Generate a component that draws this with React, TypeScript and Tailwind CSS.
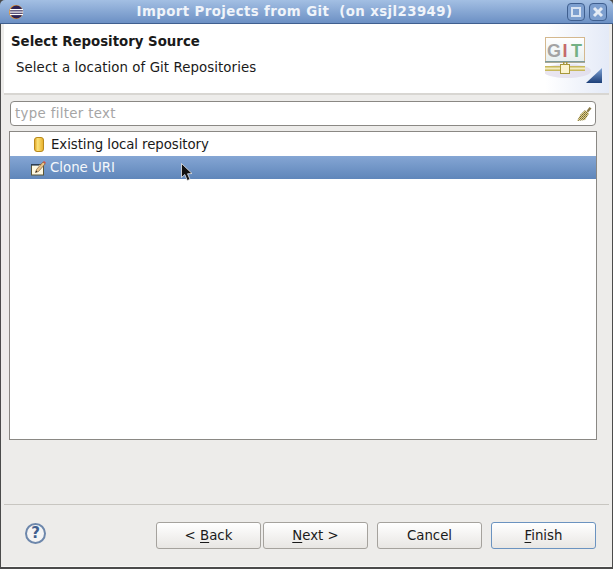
const font = "font-['DejaVu_Sans',sans-serif] text-[13.33px]";

const EclipseIcon = () => (
  <svg width="16" height="16" viewBox="0 0 16 16">
    <circle cx="8" cy="8" r="7" fill="#e8912c" />
    <circle cx="8.4" cy="8" r="6.4" fill="#2c2255" />
    <rect x="2" y="5" width="13" height="1.3" fill="#fff" />
    <rect x="1.8" y="7.4" width="13.4" height="1.3" fill="#fff" />
    <rect x="2" y="9.8" width="13" height="1.3" fill="#fff" />
  </svg>
);

const TitleButton = ({ children }: { children: React.ReactNode }) => (
  <div className="w-[18px] h-[18px] rounded-[4px] border border-[#3f5f8f] bg-[#7d9fcf] flex items-center justify-center">
    {children}
  </div>
);

const GitLogo = () => (
  <svg width="60" height="50" viewBox="0 0 60 50">
    <defs>
      <linearGradient id="tri" x1="0" y1="0" x2="0" y2="1">
        <stop offset="0" stopColor="#7fa3d6" />
        <stop offset="1" stopColor="#1c3f78" />
      </linearGradient>
      <linearGradient id="card" x1="0" y1="0" x2="0" y2="1">
        <stop offset="0" stopColor="#ffffff" />
        <stop offset="1" stopColor="#e6eeee" />
      </linearGradient>
    </defs>
    <ellipse cx="22" cy="34" rx="24" ry="7" fill="#dcd6e6" opacity="0.6" />
    <rect x="0.5" y="0.5" width="39" height="25" fill="url(#card)" stroke="#d4b88e" />
    <rect x="0" y="24" width="40" height="1.5" fill="#7f9a9a" />
    <text x="2" y="19.5" fontFamily="Liberation Sans" fontWeight="700" fontSize="18" fill="#a3a3a3">G</text>
    <text x="17.5" y="19.5" fontFamily="Liberation Sans" fontWeight="700" fontSize="18" fill="#c56a6a">I</text>
    <text x="26" y="19.5" fontFamily="Liberation Sans" fontWeight="700" fontSize="18" fill="#74b184">T</text>
    <rect x="0" y="29" width="40" height="5" fill="#f2ecc0" />
    <rect x="0" y="29" width="40" height="1.5" fill="#c8b85c" />
    <rect x="0" y="32.5" width="40" height="1.5" fill="#c8b85c" />
    <rect x="18" y="25" width="1.5" height="2" fill="#a8983c" />
    <rect x="21" y="25" width="1.5" height="2" fill="#a8983c" />
    <rect x="15.5" y="27.5" width="9" height="9" fill="#fbf4d0" stroke="#a8983c" />
    <path d="M41 46 L57 46 L57 31 Z" fill="url(#tri)" />
  </svg>
);

const Broom = () => (
  <svg width="16" height="16" viewBox="0 0 16 16">
    <defs>
      <pattern id="bristle" width="2" height="2" patternUnits="userSpaceOnUse">
        <rect width="2" height="2" fill="#e2d288" />
        <rect width="1" height="1" fill="#6f6438" />
        <rect x="1" y="1" width="1" height="1" fill="#8d8048" />
      </pattern>
    </defs>
    <path d="M10.5 5 L13.5 1 L15.5 2.5 L12 6.5 Z" fill="#8a7a48" />
    <path d="M9 4 L13 7.5 L9 14 L1 15 L4.5 8.5 Z" fill="url(#bristle)" />
  </svg>
);

const RepoIcon = () => (
  <svg width="10" height="15" viewBox="0 0 10 15">
    <defs>
      <linearGradient id="can" x1="0" y1="0" x2="1" y2="0">
        <stop offset="0" stopColor="#e0a020" />
        <stop offset="0.35" stopColor="#fbe37a" />
        <stop offset="1" stopColor="#e8ae28" />
      </linearGradient>
    </defs>
    <rect x="0.5" y="0.5" width="9" height="14" rx="2.5" fill="url(#can)" stroke="#b98a1c" />
  </svg>
);

const CloneIcon = () => (
  <svg width="16" height="16" viewBox="0 0 16 16">
    <rect x="1.5" y="4.5" width="12" height="10.5" fill="#fdf8e2" stroke="#5a5636" />
    <rect x="1" y="4" width="8" height="1.6" fill="#2d3f55" />
    <path d="M5.5 12.5 L6.5 9.5 L13 2 L15.2 3.8 L8.5 11.5 Z" fill="#e9c48a" stroke="#7a5a3a" strokeWidth="0.7" />
    <path d="M13 2 L14 1 L15.8 2.6 L15.2 3.8 Z" fill="#d8523f" />
    <path d="M5.5 12.5 L6.2 10.6 L7.4 11.8 Z" fill="#222" />
  </svg>
);

const Cursor = () => (
  <svg className="absolute left-[171px] top-[7px]" width="14" height="20" viewBox="0 0 14 20">
    <path d="M0.5 0.5 L0.5 14.5 L3.8 11.5 L6.3 17.5 L9 16.3 L6.5 10.8 L11 10.5 Z" fill="#111" stroke="#e8e8e8" strokeWidth="0.8" />
  </svg>
);

const Mnemonic = ({ children }: { children: React.ReactNode }) => (
  <span className="underline underline-offset-2">{children}</span>
);

const WizardButton = ({ children, primary }: { children: React.ReactNode; primary?: boolean }) => (
  <button
    className={`w-[105px] h-[27px] rounded-[3px] border bg-gradient-to-b from-[#ffffff] to-[#e8e6e3] text-[#1a1a1a] flex items-center justify-center ${font} ${
      primary ? "border-[#6b93c0]" : "border-[#a5a29d]"
    }`}
  >
    <span>{children}</span>
  </button>
);

export default function App() {
  return (
    <div className={`w-[613px] h-[569px] flex flex-col bg-[#4b4b4b] overflow-hidden ${font}`}>
      {/* Title bar */}
      <div className="h-[24px] shrink-0 rounded-t-[5px] bg-gradient-to-b from-[#a3bfe3] to-[#6c90c4] border-b border-[#3f5f8f] flex items-center pl-[8px] pr-[6px]">
        <EclipseIcon />
        <div className="flex-1 text-center font-bold text-[#f0f4fa] tracking-[0.4px] whitespace-pre pt-[1px] pr-[2px]">
          Import Projects from Git  (on xsjl23949)
        </div>
        <div className="flex gap-[4px]">
          <TitleButton>
            <div className="w-[10px] h-[10px] border-2 border-[#d8e3f2]" />
          </TitleButton>
          <TitleButton>
            <svg width="12" height="12" viewBox="0 0 12 12">
              <path d="M2 2 L10 10 M10 2 L2 10" stroke="#e4ebf5" strokeWidth="3" />
            </svg>
          </TitleButton>
        </div>
      </div>

      {/* Body */}
      <div className="flex-1 mx-[1px] mb-[2px] border-x-[3px] border-x-[#edecea] border-b border-b-[#f8f8f6] flex flex-col bg-[#edecea]">
        {/* Header */}
        <div className="h-[71px] shrink-0 bg-white border-b-2 border-[#d8d6d2] flex relative overflow-hidden">
          <div className="flex-1 pl-[7px] pt-[10px]">
            <div className="font-bold text-[#1a1a1a] leading-[16px]">Select Repository Source</div>
            <div className="pl-[5px] mt-[10px] text-[#1a1a1a] leading-[16px] tracking-[0.08px]">Select a location of Git Repositories</div>
          </div>
          <div className="w-[80px] bg-gradient-to-r from-white from-20% to-[#e4eaf7] pl-[16px] pt-[13px]">
            <GitLogo />
          </div>
        </div>

        {/* Filter */}
        <div className="ml-[6px] mr-[13px] mt-[6px] h-[25px] shrink-0 rounded-[4px] border border-[#8a8884] bg-white flex items-center pl-[4px] pr-[3px]">
          <span className="flex-1 text-[#a5a5a5] tracking-[0.33px]">type filter text</span>
          <Broom />
        </div>

        {/* Tree */}
        <div className="ml-[5px] mr-[12px] mt-[5px] h-[309px] shrink-0 border border-[#8a8884] bg-white">
          <div className="h-[24px] flex items-center pl-[24px] pt-[1px] gap-[7px] text-[#1a1a1a]">
            <RepoIcon />
            <span className="tracking-[-0.08px]">Existing local repository</span>
          </div>
          <div className="h-[23px] flex items-center pl-[20px] gap-[4px] text-[#f4f7fb] bg-gradient-to-b from-[#85a6d4] to-[#5f86ba] relative">
            <CloneIcon />
            <span>Clone URI</span>
            <Cursor />
          </div>
        </div>

        <div className="flex-1" />

        {/* Footer */}
        <div className="h-[62px] shrink-0 border-t border-[#c8c6c1] flex items-start pt-[17px] pl-[21px] pr-[13px]">
          <div className="w-[21px] h-[21px] mt-[1px] rounded-full border-2 border-[#6d87ab] bg-[#f4f4f4] text-[#3f5f8f] font-bold text-[15px] leading-[17px] text-center">
            ?
          </div>
          <div className="flex-1" />
          <div className="flex">
            <WizardButton>&lt; <Mnemonic>B</Mnemonic>ack</WizardButton>
            <div className="ml-[2px]">
              <WizardButton><Mnemonic>N</Mnemonic>ext &gt;</WizardButton>
            </div>
            <div className="ml-[9px]">
              <WizardButton>Cancel</WizardButton>
            </div>
            <div className="ml-[9px]">
              <WizardButton primary><Mnemonic>F</Mnemonic>inish</WizardButton>
            </div>
          </div>
        </div>
      </div>
    </div>
  );
}
